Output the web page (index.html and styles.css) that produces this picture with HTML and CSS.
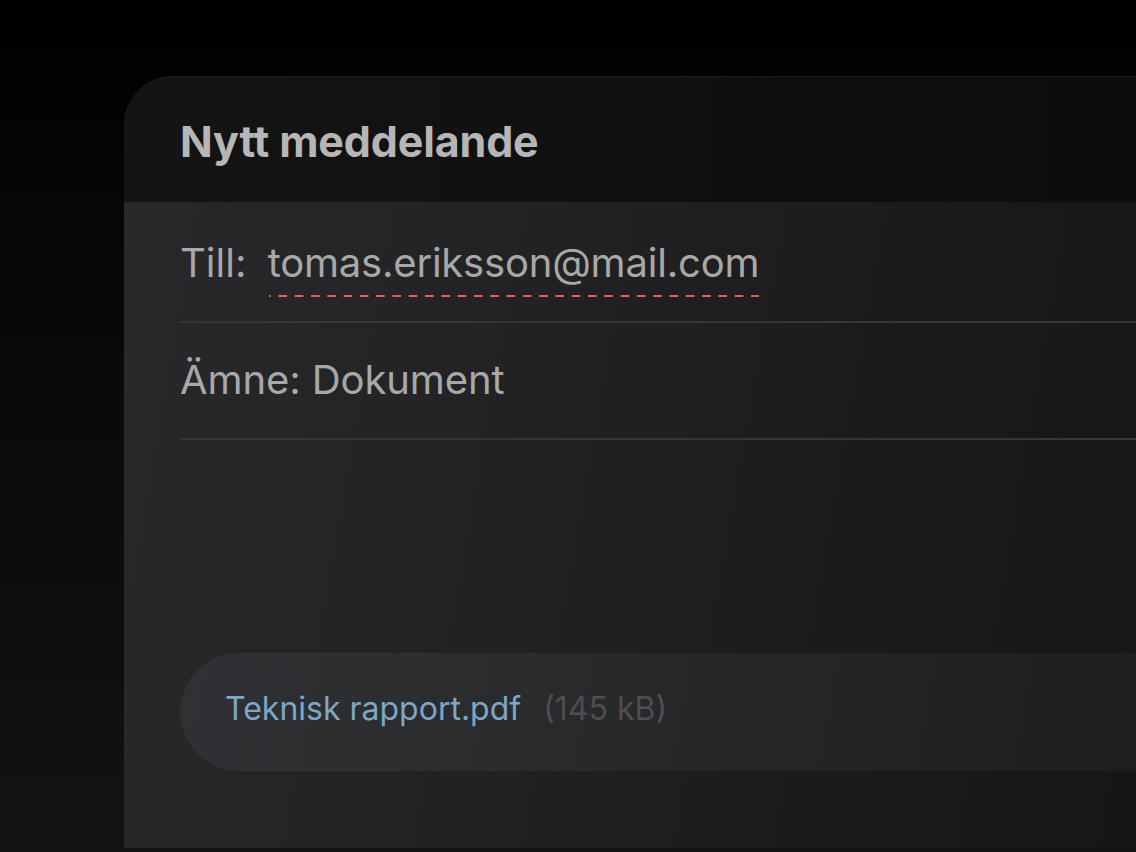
FILE: index.html
```html
<!DOCTYPE html>
<html lang="sv">
<head>
<meta charset="utf-8">
<title>Nytt meddelande</title>
<link rel="stylesheet" href="styles.css">
</head>
<body>
  <div class="window">
    <div class="header">
      <h1 class="title">Nytt meddelande</h1>
    </div>
    <div class="content">
      <div class="field field-to">
        <span class="label">Till:</span>
        <span class="address">tomas.eriksson@mail.com</span>
      </div>
      <div class="field field-subject">
        <span class="label">Ämne:</span>
        <span class="value">Dokument</span>
      </div>
      <div class="attachment">
        <span class="file-name">Teknisk rapport.pdf</span>
        <span class="file-size">(145 kB)</span>
      </div>
    </div>
  </div>
</body>
</html>
```

FILE: styles.css
```css
html, body {
  margin: 0;
  padding: 0;
}
body {
  width: 1136px;
  height: 852px;
  overflow: hidden;
  background: linear-gradient(180deg, #000000 0%, #050505 20%, #131313 100%);
  font-family: Inter, "Noto Sans", "Liberation Sans", sans-serif;
}
.window {
  margin: 76px 0 0 124px;
  width: 1012px;
  height: 772px;
  border-radius: 50px 0 0 0;
  overflow: hidden;
  box-sizing: border-box;
  border-top: 1px solid #1d1d1d;
  background: linear-gradient(100deg, #29292b 0%, #222224 40%, #1a1a1b 75%, #161617 100%);
}
.header {
  height: 125px;
  box-sizing: border-box;
  padding-left: 56px;
  display: flex;
  align-items: center;
  background: linear-gradient(90deg, #141414 0%, #101010 50%, #0d0d0d 100%);
}
.title {
  margin: 0;
  padding-top: 3px;
  font-size: 43px;
  line-height: 48px;
  font-weight: 700;
  color: #b6b6b6;
  letter-spacing: -0.15px;
}
.content {
  padding-left: 56px;
}
.field {
  font-size: 40px;
  line-height: 48px;
  color: #a8a8a8;
  border-bottom: 2px solid #363638;
  padding-bottom: 34px;
}
.field-to {
  padding-top: 37px;
}
.field-subject {
  padding-top: 33px;
}
.field-to .label {
  margin-right: 10px;
}
.field-subject {
  letter-spacing: -0.1px;
}
.address {
  position: relative;
  letter-spacing: -0.2px;
}
.address::after {
  content: "";
  position: absolute;
  left: 1px;
  right: 0;
  bottom: -10px;
  height: 2px;
  background-image: linear-gradient(90deg, transparent 0 8px, #e0625b 8px 16px);
  background-size: 16.3px 2px;
  background-position: right center;
  background-repeat: repeat-x;
}
.attachment {
  margin-top: 213px;
  height: 118px;
  box-sizing: border-box;
  padding: 36px 0 0 45px;
  border-radius: 59px 0 0 59px;
  background: linear-gradient(100deg, #303134 0%, #2a2b2d 35%, #222325 75%, #1d1e20 100%);
  font-size: 32px;
  line-height: 40px;
}
.file-name {
  color: #7ea6c6;
  margin-right: 13px;
}
.file-size {
  color: #4d4e51;
}
```
